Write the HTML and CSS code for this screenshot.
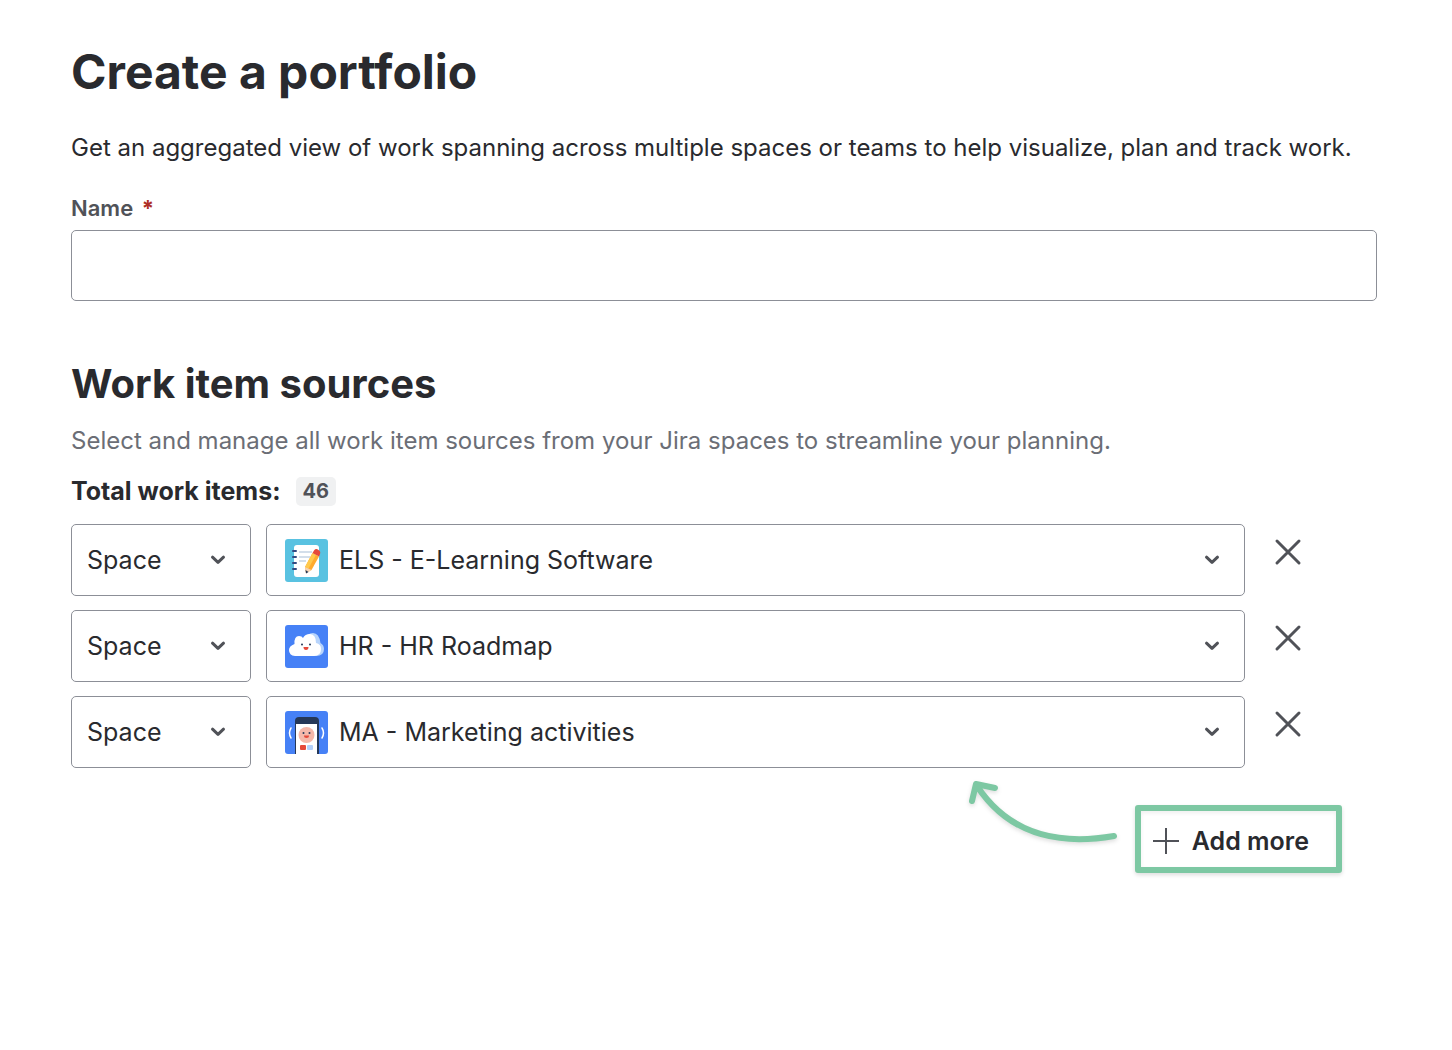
FILE: index.html
```html
<!DOCTYPE html>
<html lang="en">
<head>
<meta charset="utf-8">
<meta name="viewport" content="width=device-width, initial-scale=1">
<title>Create a portfolio</title>
<link rel="stylesheet" href="styles.css">
</head>
<body>
<svg class="symbols" aria-hidden="true">
  <symbol id="chevron" viewBox="0 0 16 10"><path d="M2.500 2.200 8 7.400l5.500-5.200"/></symbol>
  <symbol id="cross" viewBox="0 0 28 28"><path d="M3 3l22 22M25 3 3 25"/></symbol>
</svg>
<main class="page">
  <h1 class="title">Create a portfolio</h1>
  <p class="intro">Get an aggregated view of work spanning across multiple spaces or teams to help visualize, plan and track work.</p>
  <form>
    <label class="label" for="name">Name <span class="required">*</span></label>
    <input class="input" id="name" type="text" required>

    <h2 class="subtitle">Work item sources</h2>
    <p class="hint">Select and manage all work item sources from your Jira spaces to streamline your planning.</p>
    <p class="total">Total work items: <span class="badge">46</span></p>

    <div class="sources">
      <div class="source">
        <div class="field">
          <select class="select" aria-label="Source type 1"><option>Space</option></select>
          <svg class="chevron" aria-hidden="true"><use href="#chevron"/></svg>
        </div>
        <div class="field">
          <select class="select with-avatar" aria-label="Source 1"><option>ELS - E-Learning Software</option></select>
          <svg class="avatar" viewBox="0 0 43 43" aria-hidden="true">
            <rect width="43" height="43" rx="3" fill="#59c2e1"/>
            <rect x="9" y="6" width="25" height="32" rx="3" fill="#fff"/>
            <path d="M14 13h13M14 18h11M14 22h7" stroke="#d3deea" stroke-width="2"/>
            <path d="M8 12h3M8 18h3M8 24h3M8 30h3" stroke="#344a80" stroke-width="2" stroke-linecap="round"/>
            <path d="M27.500 14 34 17.500 26.500 31 21 34 20 28z" fill="#ffab2e"/>
            <path d="M27.500 14 31 15.800 23.500 29.500 20 28z" fill="#ffc94d"/>
            <path d="M20 28 26.500 31 21 34.500z" fill="#f5d3b3"/>
            <path d="M20.500 31 23.500 33 21 34.500z" fill="#253858"/>
            <path d="M27.500 14 29 11.500Q31 9 33.500 11q2.500 1.500 1.500 4L34 17.500z" fill="#e5493a"/>
          </svg>
          <svg class="chevron" aria-hidden="true"><use href="#chevron"/></svg>
        </div>
        <button class="remove" type="button" aria-label="Remove source 1"><svg class="cross"><use href="#cross"/></svg></button>
      </div>
      <div class="source">
        <div class="field">
          <select class="select" aria-label="Source type 2"><option>Space</option></select>
          <svg class="chevron" aria-hidden="true"><use href="#chevron"/></svg>
        </div>
        <div class="field">
          <select class="select with-avatar" aria-label="Source 2"><option>HR - HR Roadmap</option></select>
          <svg class="avatar" viewBox="0 0 43 43" aria-hidden="true">
            <rect width="43" height="43" rx="3" fill="#4681f6"/>
            <path d="M20 15Q22 8 28 8q6 0 7.500 10 3.500 2 3.500 6 0 7-8 7H20z" fill="#b7d4fc"/>
            <path d="M10 31q-6-.5-6-6 0-4 5.500-6Q9 11 14 11q3 0 4 2 2-4 7-4 6 .5 6 9 5 1 5 6 0 7-7 7z" fill="#fff"/>
            <circle cx="17" cy="19.500" r="1" fill="#253858"/>
            <circle cx="25" cy="19.500" r="1" fill="#253858"/>
            <path d="M18.500 22h5q0 3-2.500 3t-2.500-3z" fill="#e5493a"/>
          </svg>
          <svg class="chevron" aria-hidden="true"><use href="#chevron"/></svg>
        </div>
        <button class="remove" type="button" aria-label="Remove source 2"><svg class="cross"><use href="#cross"/></svg></button>
      </div>
      <div class="source">
        <div class="field">
          <select class="select" aria-label="Source type 3"><option>Space</option></select>
          <svg class="chevron" aria-hidden="true"><use href="#chevron"/></svg>
        </div>
        <div class="field">
          <select class="select with-avatar" aria-label="Source 3"><option>MA - Marketing activities</option></select>
          <svg class="avatar" viewBox="0 0 43 43" aria-hidden="true">
            <rect width="43" height="43" rx="3" fill="#4681f6"/>
            <path d="M10 43V10q0-4 4-4h16q4 0 4 4v33z" fill="#253858"/>
            <path d="M11 13h21v30H11z" fill="#fff"/>
            <circle cx="21.500" cy="24" r="8" fill="#f5b8aa"/>
            <circle cx="18.500" cy="22" r="1" fill="#253858"/>
            <circle cx="24.500" cy="22" r="1" fill="#253858"/>
            <path d="M19 24.500h5q0 2.500-2.500 2.500T19 24.500z" fill="#e5493a"/>
            <rect x="15" y="34" width="6" height="5" rx="1" fill="#e5493a"/>
            <rect x="22" y="34" width="6" height="5" rx="1" fill="#b3d0fb"/>
            <path d="M6 17q-3 5 0 10M37 17q3 5 0 10" fill="none" stroke="#fff" stroke-width="1.500" stroke-linecap="round"/>
          </svg>
          <svg class="chevron" aria-hidden="true"><use href="#chevron"/></svg>
        </div>
        <button class="remove" type="button" aria-label="Remove source 3"><svg class="cross"><use href="#cross"/></svg></button>
      </div>
    </div>

    <div class="actions">
      <svg class="arrow" viewBox="0 0 152 66" aria-hidden="true"><path d="M146 56C88 66 40 53 9 6M4 21 8 4 27 8"/></svg>
      <button class="add" type="button">
        <svg class="plus" viewBox="0 0 26 26" aria-hidden="true"><path d="M13 0v26M0 13h26"/></svg>
        Add more
      </button>
    </div>
  </form>
</main>
</body>
</html>
```
FILE: styles.css
```css
* {
  box-sizing: border-box;
}

body {
  margin: 0;
  background: #fff;
  color: #292a2e;
  font-family: Inter, "Liberation Sans", sans-serif;
  font-size: 25px;
  line-height: 32px;
}

.symbols {
  display: none;
}

.page {
  padding: 40px 75px 40px 71px;
}

.title,
.subtitle,
.intro,
.hint,
.total {
  margin: 0;
}

.title {
  font-size: 48px;
  line-height: 64px;
  font-weight: 700;
}

.intro,
.hint {
  font-size: 24px;
}

.intro {
  margin: 28px 0;
}

.label {
  display: block;
  margin-bottom: 6px;
  color: #505258;
  font-size: 22px;
  line-height: 32px;
  font-weight: 600;
}

.required {
  margin-left: 3px;
  color: #ae2e24;
  font-weight: 700;
}

.input {
  display: block;
  width: 100%;
  height: 71px;
  padding: 0 15px;
  border: 1px solid #8c8f97;
  border-radius: 5px;
  background: #fff;
  font: inherit;
}

.subtitle {
  margin-top: 55px;
  font-size: 40px;
  line-height: 56px;
  font-weight: 700;
}

.hint {
  margin-top: 13px;
  color: #6b6e76;
}

.total {
  display: flex;
  align-items: center;
  gap: 15px;
  margin: 18px 0 17px;
  font-weight: 700;
}

.badge {
  padding: 0 7px;
  border-radius: 5px;
  background: #f0f1f2;
  color: #505258;
  font-size: 20px;
  line-height: 29px;
}

.sources {
  display: grid;
  gap: 14px;
}

.source {
  display: grid;
  grid-template-columns: 180px 1fr 117px;
  column-gap: 15px;
}

.field {
  display: grid;
  align-items: center;
}

.field > * {
  grid-area: 1 / 1;
}

.select {
  width: 100%;
  height: 72px;
  padding: 0 48px 0 15px;
  border: 1px solid #8c8f97;
  border-radius: 5px;
  background: #fff;
  color: inherit;
  font: inherit;
  appearance: none;
}

.with-avatar {
  padding-left: 72px;
}

.avatar {
  width: 43px;
  height: 43px;
  margin-left: 19px;
  pointer-events: none;
}

.chevron {
  justify-self: end;
  width: 16px;
  height: 10px;
  margin-right: 25px;
  fill: none;
  stroke: #505258;
  stroke-width: 3;
  stroke-linecap: round;
  stroke-linejoin: round;
  pointer-events: none;
}

.remove {
  align-self: start;
  width: 56px;
  height: 56px;
  padding: 14px;
  border: 0;
  background: none;
}

.cross {
  display: block;
  width: 28px;
  height: 28px;
  stroke: #505258;
  stroke-width: 3;
  stroke-linecap: round;
}

.actions {
  display: flex;
  justify-content: flex-end;
  align-items: flex-start;
  gap: 15px;
  padding: 12px 35px 0 0;
}

.arrow {
  width: 152px;
  height: 66px;
  fill: none;
  stroke: #7dc8a3;
  stroke-width: 6;
  stroke-linecap: round;
  stroke-linejoin: round;
  filter: drop-shadow(0 2px 2px #0002);
}

.add {
  display: flex;
  align-items: center;
  gap: 13px;
  height: 68px;
  margin-top: 25px;
  padding: 4px 27px 0 12px;
  border: 6px solid #7dc8a3;
  border-radius: 3px;
  background: #fff;
  box-shadow: 0 2px 4px #0002, inset 0 2px 4px #0001;
  color: inherit;
  font: inherit;
  font-weight: 600;
}

.plus {
  width: 26px;
  height: 26px;
  stroke: #505258;
  stroke-width: 2;
}
```
